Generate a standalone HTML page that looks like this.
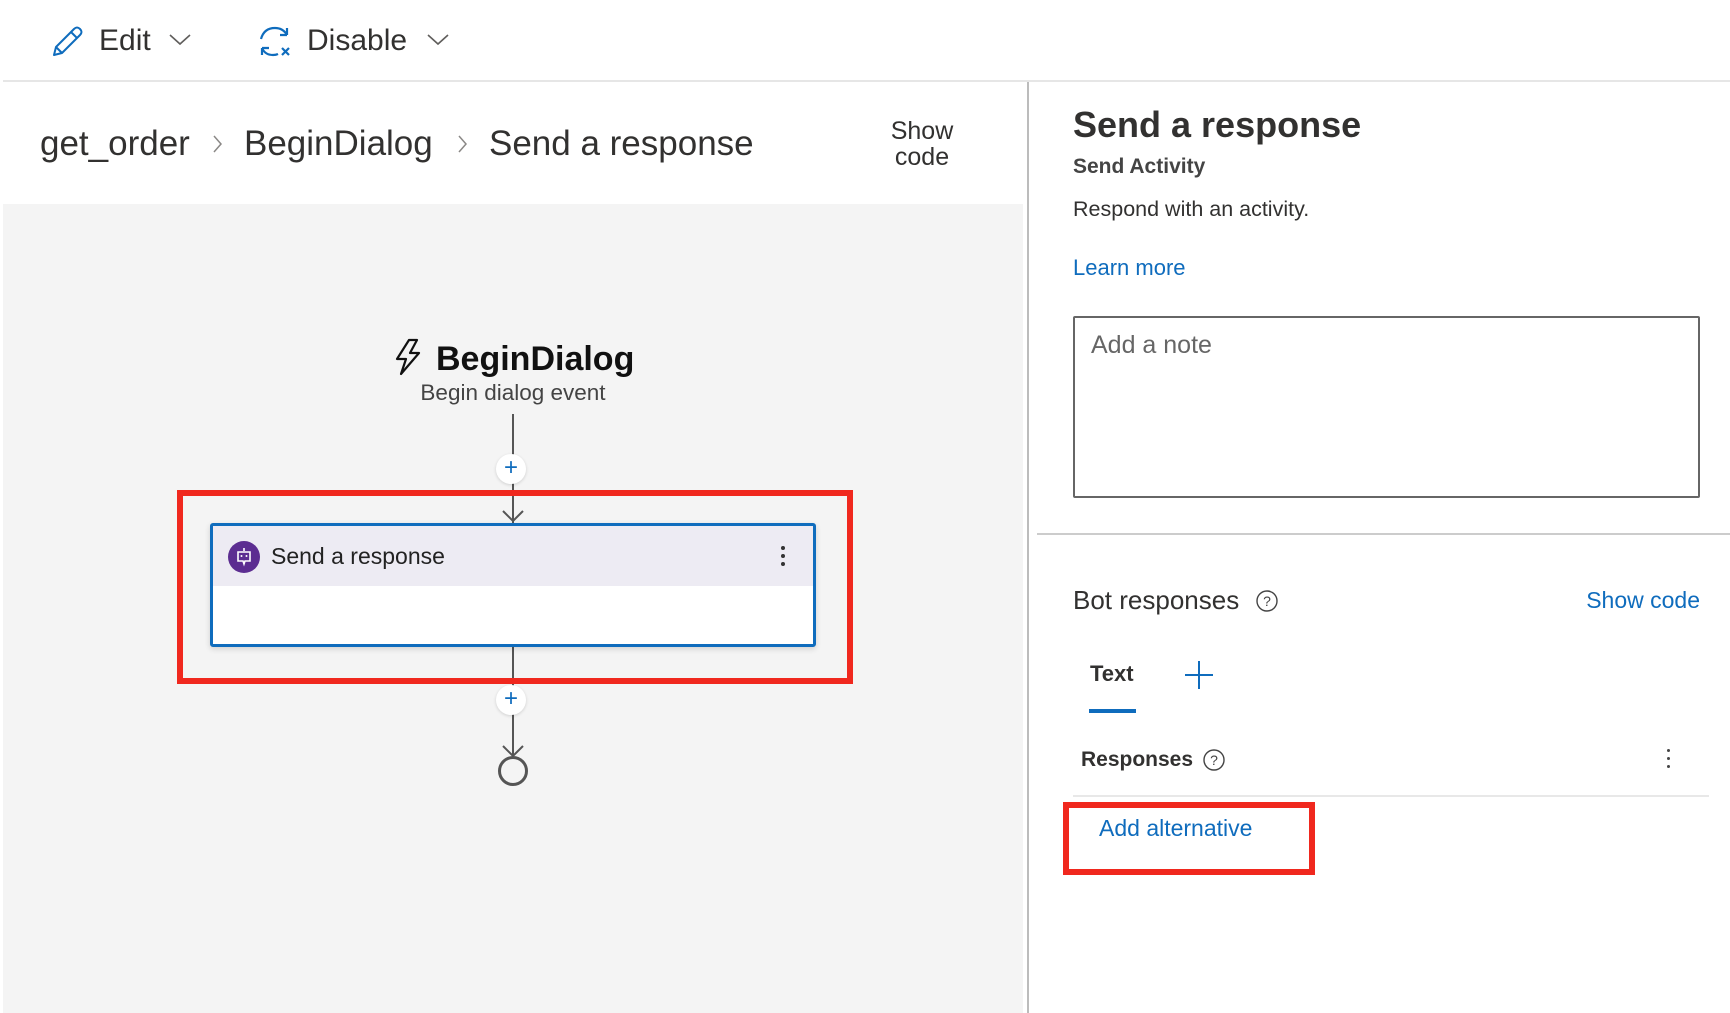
<!DOCTYPE html>
<html><head><meta charset="utf-8"><style>
*{margin:0;padding:0;box-sizing:border-box}
body{width:1730px;height:1013px;overflow:hidden;background:#fff;font-family:"Liberation Sans",sans-serif;color:#323130;position:relative}
.a{position:absolute;white-space:nowrap}
</style></head><body>
<!-- toolbar -->
<svg class="a" style="left:50px;top:24px" width="34" height="34" viewBox="0 0 34 34"><path d="M4 31 L6 23 L24 5 Q27 2 30 5 Q33 8 30 11 L12 29 Z M21 8 L27 14 M6 23 L12 29" fill="none" stroke="#0f6cbd" stroke-width="2" stroke-linejoin="round"/></svg>
<div class="a" style="left:99px;top:24px;font-size:30px;line-height:34px">Edit</div>
<svg class="a" style="left:168px;top:33px" width="24" height="14"><path d="M2 2 L12 11 L22 2" fill="none" stroke="#605e5c" stroke-width="1.6"/></svg>
<svg class="a" style="left:256px;top:24px" width="38" height="36" viewBox="0 0 38 36"><path d="M5 15 Q8 4 19 4 Q27 4 31 11 M31 11 L31 4 M31 11 L24 11" fill="none" stroke="#0f6cbd" stroke-width="2.2"/><path d="M22 30 Q20 31 17 31 Q9 31 6 24 M6 24 L6 31 M6 24 L13 24" fill="none" stroke="#0f6cbd" stroke-width="2.2"/><path d="M26 24 L33 31 M33 24 L26 31" stroke="#0f6cbd" stroke-width="2.2"/></svg>
<div class="a" style="left:307px;top:24px;font-size:30px;line-height:34px">Disable</div>
<svg class="a" style="left:426px;top:33px" width="24" height="14"><path d="M2 2 L12 11 L22 2" fill="none" stroke="#605e5c" stroke-width="1.6"/></svg>
<div class="a" style="left:3px;top:80px;width:1727px;height:2px;background:#e6e6e6"></div>

<!-- breadcrumb -->
<div class="a" style="left:40px;top:123px;font-size:35px;line-height:42px;color:#323130">get_order</div>
<svg class="a" style="left:212px;top:134px" width="12" height="20"><path d="M2 2 L9 10 L2 18" fill="none" stroke="#8a8886" stroke-width="1.5"/></svg>
<div class="a" style="left:244px;top:123px;font-size:35px;line-height:42px">BeginDialog</div>
<svg class="a" style="left:457px;top:134px" width="12" height="20"><path d="M2 2 L9 10 L2 18" fill="none" stroke="#8a8886" stroke-width="1.5"/></svg>
<div class="a" style="left:489px;top:123px;font-size:35px;line-height:42px">Send a response</div>
<div class="a" style="left:872px;top:118px;width:100px;text-align:center;font-size:25px;line-height:26px">Show<br>code</div>

<!-- canvas -->
<div class="a" style="left:3px;top:204px;width:1020px;height:809px;background:#f4f4f4"></div>
<div class="a" style="left:1027px;top:82px;width:2px;height:931px;background:#bcbcbc"></div>

<svg class="a" style="left:392px;top:338px" width="32" height="38" viewBox="0 0 32 38"><path d="M17 2 L5 21 L14 21 L9 36 L27 15 L18 15 L25 2 Z" fill="none" stroke="#111" stroke-width="2.2" stroke-linejoin="round"/></svg>
<div class="a" style="left:436px;top:338px;font-size:34px;font-weight:bold;line-height:42px;color:#111">BeginDialog</div>
<div class="a" style="left:313px;top:380px;width:400px;text-align:center;font-size:22.5px;line-height:26px;color:#444">Begin dialog event</div>

<div class="a" style="left:512px;top:414px;width:2px;height:110px;background:#555"></div>
<div class="a" style="left:496px;top:454px;width:30px;height:30px;border-radius:50%;background:#fff;box-shadow:0 1px 3px rgba(0,0,0,.15)"></div>
<div class="a" style="left:496px;top:452px;width:30px;text-align:center;font-size:24px;line-height:32px;color:#0f6cbd">+</div>
<svg class="a" style="left:501px;top:508px" width="24" height="16"><path d="M2 3 L12 13 L22 3" fill="none" stroke="#555" stroke-width="2"/></svg>

<div class="a" style="left:512px;top:647px;width:2px;height:110px;background:#555"></div>
<div class="a" style="left:496px;top:685px;width:30px;height:30px;border-radius:50%;background:#fff;box-shadow:0 1px 3px rgba(0,0,0,.15)"></div>
<div class="a" style="left:496px;top:683px;width:30px;text-align:center;font-size:24px;line-height:32px;color:#0f6cbd">+</div>
<svg class="a" style="left:501px;top:743px" width="24" height="16"><path d="M2 3 L12 13 L22 3" fill="none" stroke="#555" stroke-width="2"/></svg>
<div class="a" style="left:498px;top:756px;width:30px;height:30px;border-radius:50%;border:3.5px solid #555;background:#f4f4f4"></div>

<!-- node -->
<div class="a" style="left:210px;top:523px;width:606px;height:124px;border:3px solid #0f6cbd;border-radius:3px;background:#fff;box-shadow:0 2px 6px rgba(0,0,0,.15);overflow:hidden">
  <div style="height:60px;background:#edebf3;position:relative">
    <div class="a" style="left:15px;top:15px;width:32px;height:32px;border-radius:50%;background:#5c2d91"></div>
    <svg class="a" style="left:21px;top:20px" width="20" height="22" viewBox="0 0 20 22"><path d="M10 2 V5 M4 6 H16 V15 H11 L10 18 L9 15 H4 Z" fill="none" stroke="#fff" stroke-width="1.6"/><circle cx="7.5" cy="10" r="1" fill="#fff"/><circle cx="12.5" cy="10" r="1" fill="#fff"/></svg>
    <div class="a" style="left:58px;top:15px;font-size:23px;line-height:30px;color:#222">Send a response</div>
    <div class="a" style="left:568px;top:20px;width:4px;height:4px;border-radius:50%;background:#333"></div>
    <div class="a" style="left:568px;top:28px;width:4px;height:4px;border-radius:50%;background:#333"></div>
    <div class="a" style="left:568px;top:36px;width:4px;height:4px;border-radius:50%;background:#333"></div>
  </div>
</div>
<div class="a" style="left:177px;top:490px;width:676px;height:194px;border:6px solid #f0281e"></div>

<!-- right panel -->
<div class="a" style="left:1073px;top:104px;font-size:36px;font-weight:bold;line-height:42px;color:#323130">Send a response</div>
<div class="a" style="left:1073px;top:154px;font-size:21px;font-weight:bold;line-height:26px;color:#444">Send Activity</div>
<div class="a" style="left:1073px;top:196px;font-size:21.5px;line-height:26px;color:#323130">Respond with an activity.</div>
<div class="a" style="left:1073px;top:255px;font-size:22px;line-height:26px;color:#0f6cbd">Learn more</div>
<div class="a" style="left:1073px;top:316px;width:627px;height:182px;border:2px solid #666;border-radius:2px"></div>
<div class="a" style="left:1091px;top:330px;font-size:25px;line-height:30px;color:#666">Add a note</div>
<div class="a" style="left:1037px;top:533px;width:693px;height:2px;background:#ccc"></div>

<div class="a" style="left:1073px;top:585px;font-size:26px;line-height:30px;color:#323130">Bot responses</div>
<svg class="a" style="left:1255px;top:589px" width="24" height="24"><circle cx="12" cy="12" r="10" fill="none" stroke="#444" stroke-width="1.4"/><text x="12" y="17" text-anchor="middle" font-family="Liberation Sans" font-size="14" fill="#444">?</text></svg>
<div class="a" style="left:1500px;top:585px;width:200px;text-align:right;font-size:23px;line-height:30px;color:#0f6cbd">Show code</div>

<div class="a" style="left:1090px;top:661px;font-size:22px;font-weight:bold;line-height:26px;color:#323130">Text</div>
<div class="a" style="left:1089px;top:709px;width:47px;height:4px;background:#0f6cbd"></div>
<svg class="a" style="left:1183px;top:659px" width="32" height="32"><path d="M16 2 V30 M2 16 H30" stroke="#0f6cbd" stroke-width="2"/></svg>

<div class="a" style="left:1081px;top:747px;font-size:21px;font-weight:bold;line-height:26px;color:#323130">Responses</div>
<svg class="a" style="left:1202px;top:748px" width="24" height="24"><circle cx="12" cy="12" r="10" fill="none" stroke="#444" stroke-width="1.4"/><text x="12" y="17" text-anchor="middle" font-family="Liberation Sans" font-size="14" fill="#444">?</text></svg>
<div class="a" style="left:1667px;top:749px;width:3px;height:3px;border-radius:50%;background:#444"></div>
<div class="a" style="left:1667px;top:757px;width:3px;height:3px;border-radius:50%;background:#444"></div>
<div class="a" style="left:1667px;top:765px;width:3px;height:3px;border-radius:50%;background:#444"></div>
<div class="a" style="left:1073px;top:795px;width:636px;height:2px;background:#e8e8e8"></div>

<div class="a" style="left:1099px;top:815px;font-size:23px;line-height:26px;color:#0f6cbd">Add alternative</div>
<div class="a" style="left:1063px;top:802px;width:252px;height:73px;border:6px solid #f0281e"></div>
</body></html>
